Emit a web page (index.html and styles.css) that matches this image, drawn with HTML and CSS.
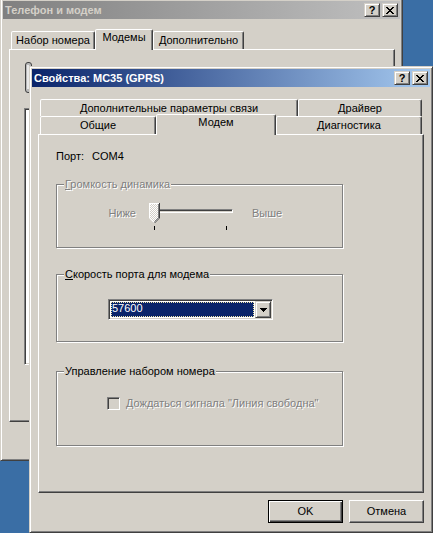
FILE: index.html
```html
<!DOCTYPE html>
<html lang="ru">
<head>
<meta charset="utf-8">
<title>Свойства: MC35 (GPRS)</title>
<link rel="stylesheet" href="styles.css">
</head>
<body>
<div class="win back">
  <div class="titlebar inactive">
    <span class="title">Телефон и модем</span>
    <div class="tbtns">
      <span class="tb">?</span>
      <span class="tb"><svg width="8" height="7" viewBox="0 0 8 7" shape-rendering="crispEdges"><path d="M0 0h2v1H0zM6 0h2v1H6zM1 1h2v1H1zM5 1h2v1H5zM2 2h4v1H2zM3 3h2v1H3zM2 4h4v1H2zM1 5h2v1H1zM5 5h2v1H5zM0 6h2v1H0zM6 6h2v1H6z" fill="#000"/></svg></span>
    </div>
  </div>
  <div class="tabs">
    <div class="tabrow back-row">
      <div class="tab" style="width:84px">Набор номера</div>
      <div class="tab sel" style="width:58px">Модемы</div>
      <div class="tab" style="width:91px">Дополнительно</div>
    </div>
    <div class="panel back-panel">
      <svg class="phone" width="32" height="32" viewBox="0 0 32 32"><rect x="0.5" y="0.5" width="6" height="30" rx="2.5" fill="#b8b8b8" stroke="#404040"/><rect x="2" y="3" width="2" height="24" fill="#e8e8e8"/></svg>
      <div class="listbox"></div>
    </div>
  </div>
</div>

<div class="win front">
  <div class="titlebar active">
    <span class="title">Свойства: MC35 (GPRS)</span>
    <div class="tbtns">
      <span class="tb">?</span>
      <span class="tb"><svg width="8" height="7" viewBox="0 0 8 7" shape-rendering="crispEdges"><path d="M0 0h2v1H0zM6 0h2v1H6zM1 1h2v1H1zM5 1h2v1H5zM2 2h4v1H2zM3 3h2v1H3zM2 4h4v1H2zM1 5h2v1H1zM5 5h2v1H5zM0 6h2v1H0zM6 6h2v1H6z" fill="#000"/></svg></span>
    </div>
  </div>
  <div class="tabs">
    <div class="tabrow row1">
      <div class="tab" style="width:258px">Дополнительные параметры связи</div>
      <div class="tab" style="width:124px">Драйвер</div>
    </div>
    <div class="tabrow row2">
      <div class="tab" style="width:116px">Общие</div>
      <div class="tab sel" style="width:120px">Модем</div>
      <div class="tab" style="width:146px">Диагностика</div>
    </div>
    <div class="panel front-panel">
      <div class="port"><span>Порт:</span><span class="port-val">COM4</span></div>

      <div class="group g1">
        <span class="legend disabled"><u>Г</u>ромкость динамика</span>
        <div class="slider-row">
          <span class="lo disabled">Ниже</span>
          <div class="slider">
            <div class="track"></div>
            <svg class="thumb" width="11" height="20" viewBox="0 0 11 20" shape-rendering="crispEdges">
              <defs>
                <pattern id="chk" width="2" height="2" patternUnits="userSpaceOnUse">
                  <rect width="2" height="2" fill="#d4d0c8"/>
                  <rect width="1" height="1" fill="#fff"/>
                  <rect x="1" y="1" width="1" height="1" fill="#fff"/>
                </pattern>
              </defs>
              <polygon points="0,0 11,0 11,15 6,20 5,20 0,15" fill="url(#chk)"/>
              <path d="M0.5 15V0.5H10" stroke="#fff" fill="none"/>
              <path d="M0.5 15L5 19.5" stroke="#fff" fill="none" shape-rendering="auto"/>
              <path d="M10.5 0V15" stroke="#404040" fill="none"/>
              <path d="M10.5 15L5.5 20" stroke="#404040" fill="none" shape-rendering="auto"/>
              <path d="M9.5 1V14.5" stroke="#808080" fill="none"/>
              <path d="M9.5 14.5L5.5 18.5" stroke="#808080" fill="none" shape-rendering="auto"/>
            </svg>
            <span class="tick t1"></span>
            <span class="tick t2"></span>
          </div>
          <span class="hi disabled">Выше</span>
        </div>
      </div>

      <div class="group g2">
        <span class="legend"><u>С</u>корость порта для модема</span>
        <div class="combo">
          <div class="combo-field"><span>57600</span></div>
          <div class="combo-btn"><svg width="7" height="4" viewBox="0 0 7 4" shape-rendering="crispEdges"><path d="M0 0h7v1H0zM1 1h5v1H1zM2 2h3v1H2zM3 3h1v1H3z" fill="#000"/></svg></div>
        </div>
      </div>

      <div class="group g3">
        <span class="legend">Управление набором номера</span>
        <div class="check-row">
          <span class="checkbox"></span>
          <span class="disabled"><u>Д</u>ождаться сигнала "Линия свободна"</span>
        </div>
      </div>
    </div>
    <div class="buttons">
      <div class="btn default">OK</div>
      <div class="btn">Отмена</div>
    </div>
  </div>
</div>
</body>
</html>
```
FILE: styles.css
```css
* { box-sizing: border-box; }
html, body { margin: 0; padding: 0; }
body {
  width: 433px;
  height: 533px;
  overflow: hidden;
  position: relative;
  background: #3a6ea5;
  font: 11px/13px "Liberation Sans", Arial, sans-serif;
  color: #000;
}

/* windows */
.win {
  position: absolute;
  display: flex;
  flex-direction: column;
  background: #d4d0c8;
  border: 1px solid;
  border-color: #d4d0c8 #404040 #404040 #d4d0c8;
  box-shadow: inset 1px 1px #fff, inset -1px -1px #808080;
  padding: 2px;
}
.back { left: 0; top: -2px; width: 403px; height: 463px; z-index: 1; }
.front { left: 29px; top: 66px; width: 404px; height: 467px; z-index: 2; }

.titlebar {
  height: 18px;
  display: flex;
  align-items: center;
  padding-left: 2px;
  flex: none;
}
.titlebar.active { background: linear-gradient(to right, #0a246a, #a6caf0); color: #fff; }
.titlebar.inactive { background: linear-gradient(to right, #808080, #c0c0c0); color: #d4d0c8; }
.title { flex: 1; font-weight: bold; white-space: nowrap; }
.tbtns { display: flex; gap: 2px; margin-right: 2px; }
.tb {
  width: 16px;
  height: 14px;
  display: flex;
  align-items: center;
  justify-content: center;
  background: #d4d0c8;
  border: 1px solid;
  border-color: #d4d0c8 #404040 #404040 #d4d0c8;
  box-shadow: inset 1px 1px #fff, inset -1px -1px #808080;
  color: #000;
  font-weight: bold;
  font-size: 11px;
  line-height: 12px;
}

/* tabs */
.tabs { display: flex; flex-direction: column; margin: 12px 6px 0; }
.tabrow { display: flex; align-items: flex-start; padding-left: 2px; height: 18px; flex: none; }
.row1 { height: 17px; }
.tab {
  flex: none;
  height: 18px;
  border: 1px solid;
  border-bottom: none;
  border-color: #fff #404040 transparent #fff;
  border-radius: 2px 2px 0 0;
  box-shadow: inset -1px 0 #808080;
  background: #d4d0c8;
  text-align: center;
  line-height: 16px;
  white-space: nowrap;
}
.row1 .tab { height: 17px; }
.tab.sel {
  position: relative;
  z-index: 1;
  height: 21px;
  margin-top: -2px;
  line-height: 15px;
}

.panel {
  flex: none;
  width: 386px;
  background: #d4d0c8;
  border: 1px solid;
  border-color: #fff #404040 #404040 #fff;
  box-shadow: inset -1px -1px #808080;
}
.back-panel { height: 373px; display: flex; flex-direction: column; align-items: flex-start; padding: 12px 0 0 15px; }
.phone { display: block; }
.listbox {
  margin-top: 14px;
  margin-left: -1px;
  width: 360px;
  height: 257px;
  background: #fff;
  border: 1px solid;
  border-color: #808080 #fff #fff #808080;
  box-shadow: inset 1px 1px #404040, inset -1px -1px #d4d0c8;
}

.front-panel { height: 359px; display: flex; flex-direction: column; align-items: flex-start; padding: 15px 0 0 17px; }
.port { height: 13px; display: flex; }
.port-val { margin-left: 8px; }

.disabled { color: #808080; text-shadow: 1px 1px #fff; }

/* group boxes */
.group {
  position: relative;
  width: 287px;
  border: 1px solid #808080;
  box-shadow: inset 1px 1px #fff, 1px 1px #fff;
}
.g1 { margin-top: 21px; height: 64px; padding: 18px 0 0 51px; }
.g2 { margin-top: 26px; height: 68px; padding: 24px 0 0 51px; }
.g3 { margin-top: 29px; height: 75px; padding: 25px 0 0 50px; }
.legend {
  position: absolute;
  top: -7px;
  left: 7px;
  padding: 0 1px;
  background: #d4d0c8;
  white-space: nowrap;
  line-height: 13px;
}

.slider-row { display: flex; align-items: flex-start; }
.lo { width: 28px; text-align: right; margin-top: 4px; white-space: nowrap; }
.hi { margin-left: 19px; margin-top: 4px; }
.slider { position: relative; width: 84px; height: 27px; margin-left: 13px; }
.track {
  position: absolute;
  left: 2px;
  top: 6px;
  width: 82px;
  height: 4px;
  border: 1px solid;
  border-color: #808080 #fff #fff #808080;
  box-shadow: inset 1px 1px #404040, inset -1px -1px #d4d0c8;
}
.thumb { position: absolute; left: 0; top: 0; display: block; }
.tick { position: absolute; top: 23px; width: 1px; height: 4px; background: #000; }
.t1 { left: 5px; }
.t2 { left: 77px; }

/* combo */
.combo {
  width: 165px;
  height: 21px;
  display: flex;
  background: #fff;
  border: 1px solid;
  border-color: #808080 #fff #fff #808080;
  box-shadow: inset 1px 1px #404040, inset -1px -1px #d4d0c8;
  padding: 1px;
}
.combo-field {
  flex: 1;
  margin: 1px;
  background: #0a246a;
  color: #fff;
  padding-left: 1px;
  line-height: 13px;
  outline: 1px dotted #f0e6a8;
  outline-offset: -1px;
}
.combo-btn {
  flex: none;
  width: 16px;
  height: 17px;
  display: flex;
  align-items: center;
  justify-content: center;
  background: #d4d0c8;
  border: 1px solid;
  border-color: #d4d0c8 #404040 #404040 #d4d0c8;
  box-shadow: inset 1px 1px #fff, inset -1px -1px #808080;
}
.combo-btn svg { display: block; }

/* checkbox */
.check-row { display: flex; align-items: center; gap: 6px; }
.checkbox {
  flex: none;
  width: 13px;
  height: 13px;
  background: #d4d0c8;
  border: 1px solid;
  border-color: #808080 #fff #fff #808080;
  box-shadow: inset 1px 1px #404040, inset -1px -1px #d4d0c8;
}

/* buttons */
.buttons { display: flex; justify-content: flex-end; gap: 6px; margin-top: 7px; }
.btn {
  width: 75px;
  height: 23px;
  display: flex;
  align-items: center;
  justify-content: center;
  background: #d4d0c8;
  border: 1px solid;
  border-color: #fff #404040 #404040 #fff;
  box-shadow: inset -1px -1px #808080;
}
.btn.default {
  border-color: #000;
  box-shadow: inset 1px 1px #fff, inset -1px -1px #404040, inset -2px -2px #808080;
}
```
